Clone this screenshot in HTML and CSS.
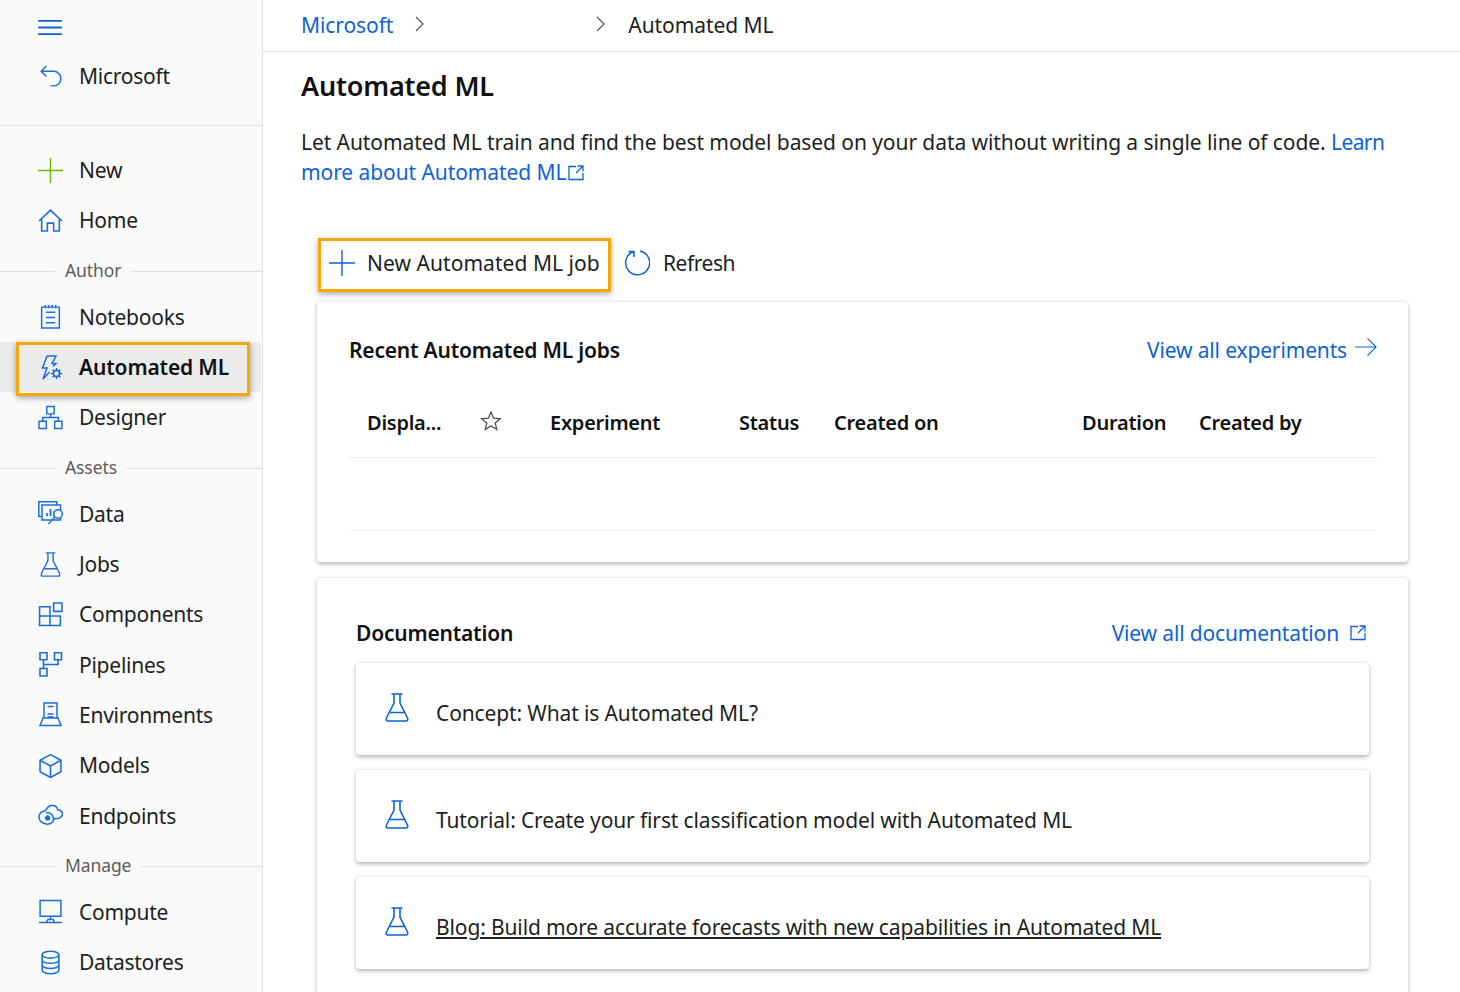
FILE: index.html
```html
<!DOCTYPE html>
<html lang="en">
<head>
<meta charset="utf-8">
<title>Automated ML</title>
<link rel="stylesheet" href="styles.css">
</head>
<body>
<svg class="defs" width="0" height="0" aria-hidden="true">
  <symbol id="flask" viewBox="0 0 24 29"><path d="M6.500 1h11M9 1v9L1.500 25c-.7 1.500 0 3 1.500 3h18c1.500 0 2.200-1.500 1.500-3L15 10V1M5 19.500h14" fill="none" stroke="currentColor" stroke-width="1.600"/></symbol>
</svg>
<div class="app">
  <nav class="side">
    <div class="burger-row"><svg class="ico burger" viewBox="0 0 26 18"><path d="M0 2h25M0 9h25M0 16h25" stroke="currentColor" stroke-width="2" fill="none"/></svg></div>
    <a class="row back"><svg class="ico" viewBox="0 0 24 24"><path d="M8 2 3 7l5 5M3 7h12a6.500 6.500 0 0 1 0 14h-3" fill="none" stroke="currentColor" stroke-width="1.400"/></svg><span>Microsoft</span></a>
    <div class="side-rule"></div>
    <a class="row"><svg class="ico green" viewBox="0 0 26 26"><path d="M13 0v26M0 13h26" stroke="currentColor" stroke-width="1.500" fill="none"/></svg><span>New</span></a>
    <a class="row"><svg class="ico" viewBox="0 0 24 24"><path d="M1 12.500 12 2l11 10.500M3.500 10.500V22H9v-7.500h6V22h5.500V10.500" fill="none" stroke="currentColor" stroke-width="1.500"/></svg><span>Home</span></a>
    <div class="sec"><span>Author</span></div>
    <a class="row"><svg class="ico" viewBox="0 0 24 24"><path d="M3.500 3h17v20h-17zM7 1v3M10.300 1v3M13.700 1v3M17 1v3M7.500 8h9M7.500 13h9M7.500 18h9" fill="none" stroke="currentColor" stroke-width="1.400"/></svg><span>Notebooks</span></a>
    <a class="row sel"><svg class="ico" viewBox="0 0 25 25"><path d="M9 1h9l-4 7.500h4l-3 3M9 1 4.500 13H9L5 24l6.500-7" fill="none" stroke="currentColor" stroke-width="1.500"/><circle cx="18.500" cy="18.500" r="3" fill="none" stroke="currentColor" stroke-width="1.600"/><path d="M18.500 13v2.500M18.500 21.500V24M13 18.500h2.500M21.500 18.500H24M14.700 14.700l1.700 1.700M20.600 20.600l1.700 1.700M14.700 22.300l1.700-1.700M20.600 16.400l1.700-1.700" stroke="currentColor" stroke-width="1.500" fill="none"/></svg><span>Automated ML</span></a>
    <a class="row"><svg class="ico" viewBox="0 0 24 24"><path d="M8.500 1.500h7v7h-7zM1 15.500h7v7H1zM16 15.500h7v7h-7zM12 8.500V12M4.500 15.500V12h15v3.500" fill="none" stroke="currentColor" stroke-width="1.400"/></svg><span>Designer</span></a>
    <div class="sec"><span>Assets</span></div>
    <a class="row"><svg class="ico" viewBox="0 0 25 25"><path d="M3 15.500H.8V.8h18V4" fill="none" stroke="currentColor" stroke-width="1.500"/><path d="M4 4h18.500v15H4z" fill="none" stroke="currentColor" stroke-width="1.500"/><path d="M9 15v-3M12.500 15V8M16 15v-4.500" stroke="currentColor" stroke-width="1.800" fill="none"/><circle cx="20" cy="13" r="4.300" fill="#fafafa" stroke="currentColor" stroke-width="1.500"/><path d="M16.800 16 10.500 23" stroke="currentColor" stroke-width="1.500" fill="none"/></svg><span>Data</span></a>
    <a class="row"><svg class="ico" viewBox="0 0 24 29"><use href="#flask"/></svg><span>Jobs</span></a>
    <a class="row"><svg class="ico" viewBox="0 0 24 24"><path d="M1.500 4.500h10v18h-10zM1.500 13.500h20v9h-10M11.500 13.500h10M15 1h8v8h-8z" fill="none" stroke="currentColor" stroke-width="1.500"/></svg><span>Components</span></a>
    <a class="row"><svg class="ico" viewBox="0 0 25 25"><path d="M2 .8h7v7H2zM16.500 .8h7v7h-7zM2 16.500h7v7.500H2zM5.500 7.800v8.700M20 7.800v4.700H5.500" fill="none" stroke="currentColor" stroke-width="1.600"/></svg><span>Pipelines</span></a>
    <a class="row"><svg class="ico" viewBox="0 0 25 25"><path d="M6 15.500V1h13v14.500M2 23.500 5 16h15l3 7.500zM9.500 4.500h6M9.500 12h6M9.500 15h6" fill="none" stroke="currentColor" stroke-width="1.500"/></svg><span>Environments</span></a>
    <a class="row"><svg class="ico" viewBox="0 0 24 24"><path d="M12 1.500 22 7v11l-10 5.500L2 18V7zM2 7l10 5.500L22 7M12 12.500v11" fill="none" stroke="currentColor" stroke-width="1.500" stroke-linejoin="round"/></svg><span>Models</span></a>
    <a class="row"><svg class="ico" viewBox="0 0 26 26"><path d="M8 8C10 2 19 0 20.500 7 25 7 26.500 12 24.500 14 23 16.500 20 16.500 17 16.500M8 8C4 8 1 11 1 14.500 1 19 5 22 10 22 14.500 22 17 18.500 16 15 15 11.500 12 9.500 8.500 10.500" fill="none" stroke="currentColor" stroke-width="1.600"/><circle cx="10" cy="15.500" r="2.700" fill="currentColor"/></svg><span>Endpoints</span></a>
    <div class="sec"><span>Manage</span></div>
    <a class="row"><svg class="ico" viewBox="0 0 24 24"><path d="M2 1.500h20v15H2zM12 16.500V20M8 22.500l1.500-2.800h5l1.500 2.800zM1 22.500h22" fill="none" stroke="currentColor" stroke-width="1.400"/></svg><span>Compute</span></a>
    <a class="row"><svg class="ico" viewBox="0 0 24 24"><ellipse cx="12" cy="4.500" rx="8" ry="3.300" fill="none" stroke="currentColor" stroke-width="1.500"/><path d="M4 4.500v15c0 1.900 3.600 3.300 8 3.300s8-1.400 8-3.300v-15M4 9.500c0 1.900 3.600 3.300 8 3.300s8-1.400 8-3.300M4 14.500c0 1.900 3.600 3.300 8 3.300s8-1.400 8-3.300" fill="none" stroke="currentColor" stroke-width="1.500"/></svg><span>Datastores</span></a>
  </nav>
  <main class="main">
    <header class="crumbs">
      <a class="link">Microsoft</a>
      <svg class="chev" viewBox="0 0 10 16"><path d="M1 1l7 7-7 7" fill="none" stroke="currentColor" stroke-width="1.200"/></svg>
      <span class="crumb-gap"></span>
      <svg class="chev" viewBox="0 0 10 16"><path d="M1 1l7 7-7 7" fill="none" stroke="currentColor" stroke-width="1.200"/></svg>
      <span class="crumb-cur">Automated ML</span>
    </header>
    <div class="content">
      <h1 class="title">Automated ML</h1>
      <div class="intro">
        <p class="line">Let Automated ML train and find the best model based on your data without writing a single line of code. <a class="link learn">Learn</a></p>
        <p class="line"><a class="link">more about Automated ML<svg class="ext" viewBox="0 0 16 16"><path d="M8 1.500H1v13h14V8M9.500 1H15v5.500M15 1 8 8" fill="none" stroke="currentColor" stroke-width="1.300"/></svg></a></p>
      </div>
      <div class="toolbar">
        <button class="tbtn primary"><svg class="tico" viewBox="0 0 26 26"><path d="M13 0v26M0 13h26" stroke="currentColor" stroke-width="1.400" fill="none"/></svg><span>New Automated ML job</span></button>
        <button class="tbtn refresh"><svg class="tico" viewBox="0 0 26 26"><path d="M16 1A12 12 0 1 1 9.500 1.500M4.500 1.500H10V7" fill="none" stroke="currentColor" stroke-width="1.500"/></svg><span>Refresh</span></button>
      </div>
      <section class="card recent">
        <div class="card-head">
          <h2>Recent Automated ML jobs</h2>
          <a class="link more">View all experiments<svg class="arrow" viewBox="0 0 24 20"><path d="M0 10h22M13 1l9 9-9 9" fill="none" stroke="currentColor" stroke-width="1.200"/></svg></a>
        </div>
        <div class="thead">
          <span>Displa...</span>
          <span><svg class="star" viewBox="0 0 22 22"><path d="M11 2l2.600 6.200 6.600.5-5 4.300 1.600 6.500L11 16l-5.800 3.500L6.800 13l-5-4.300 6.600-.5z" fill="none" stroke="currentColor" stroke-width="1.200"/></svg></span>
          <span>Experiment</span>
          <span>Status</span>
          <span>Created on</span>
          <span>Duration</span>
          <span>Created by</span>
        </div>
        <div class="tbody"></div>
      </section>
      <section class="card docs">
        <div class="doc-head">
          <h2>Documentation</h2>
          <a class="link more">View all documentation<svg class="ext big" viewBox="0 0 16 16"><path d="M8 1.500H1v13h14V8M9.500 1H15v5.500M15 1 8 8" fill="none" stroke="currentColor" stroke-width="1.300"/></svg></a>
        </div>
        <article class="doc"><svg class="doc-ico" viewBox="0 0 24 29"><use href="#flask"/></svg><span>Concept: What is Automated ML?</span></article>
        <article class="doc"><svg class="doc-ico" viewBox="0 0 24 29"><use href="#flask"/></svg><span>Tutorial: Create your first classification model with Automated ML</span></article>
        <article class="doc"><svg class="doc-ico" viewBox="0 0 24 29"><use href="#flask"/></svg><span class="u">Blog: Build more accurate forecasts with new capabilities in Automated ML</span></article>
      </section>
    </div>
  </main>
</div>
</body>
</html>
```
FILE: styles.css
```css
* { box-sizing: border-box; }
html, body { margin: 0; height: 992px; overflow: hidden; background: #fff; }
body { font-family: "Noto Sans", "Open Sans", sans-serif; font-size: 21px; color: #201f1e; letter-spacing: -0.08px; }
.defs { position: absolute; }
.app { display: flex; height: 992px; }

.side { width: 263px; flex: none; background: #fafafa; border-right: 1px solid #e1e1e1; display: flex; flex-direction: column; overflow: hidden; letter-spacing: -0.25px; }
.burger-row { height: 51px; padding: 19px 0 0 38px; }
.ico { width: 25px; height: 25px; color: #1a6ddb; flex: none; }
.burger { display: block; height: 17px; width: 25px; color: #0b5fd8; }
.green { color: #6bb700; }
.row { display: flex; align-items: center; gap: 16px; height: 50.320px; padding-left: 38px; color: #201f1e; flex: none; }
.back { height: 50px; }
.side-rule { height: 1px; background: #e1e1e1; margin: 24px 0 19px; flex: none; }
.sec { height: 46px; flex: none; display: flex; align-items: center; padding-top: 2px; font-size: 17.500px; color: #5c5c5c; gap: 10px; letter-spacing: -0.1px; }
.sec::before { content: ""; width: 55px; height: 1px; background: #e1e1e1; margin-top: 4px; }
.sec::after { content: ""; flex: 1; height: 1px; background: #e1e1e1; margin-top: 4px; }
.sel { position: relative; background: #ebebeb; font-weight: 600; margin-right: 1px; border-radius: 0 4px 4px 0; color: #111; letter-spacing: -0.15px; }
.sel::after { content: ""; position: absolute; left: 16px; top: 0; width: 228px; height: 48px; border: 3px solid #f7a707; box-shadow: 0 2px 6px rgba(0,0,0,.35); }

.main { flex: 1; min-width: 0; }
.crumbs { height: 52px; border-bottom: 1px solid #e1e1e1; display: flex; align-items: center; padding: 0 0 2px 38px; }
.link { color: #0f62d6; }
.chev { width: 10px; height: 16px; color: #555; margin-left: 22px; margin-top: -2px; }
.crumb-gap { width: 149px; }
.crumb-cur { margin-left: 22px; }
.content { padding: 0 51px 0 38px; }
.title { margin: 14px 0 0; font-size: 27px; line-height: 40px; font-weight: 600; color: #111; letter-spacing: -0.2px; }
.intro { margin: 21px 0 0; line-height: 30px; color: #201f1e; }
.line { margin: 0; white-space: nowrap; }
.learn { letter-spacing: -0.6px; }
.ext { width: 16px; height: 16px; margin-left: 2px; vertical-align: -1px; }
.ext.big { margin-left: 11px; vertical-align: -1px; }

.toolbar { display: flex; align-items: center; margin: 51px 0 0 17px; height: 54px; gap: 13px; }
.tbtn { display: flex; align-items: center; gap: 12px; height: 54px; background: none; border: 0; font: inherit; letter-spacing: 0.05px; color: #201f1e; padding: 0 0 5px; }
.tbtn.primary { position: relative; width: 293px; padding-left: 11px; }
.tbtn.primary::after { content: ""; position: absolute; inset: 0; border: 3px solid #f7a707; box-shadow: 0 2px 6px rgba(0,0,0,.35); }
.tbtn.refresh { letter-spacing: -0.45px; gap: 13px; }
.tico { width: 26px; height: 26px; color: #0f62d6; flex: none; }

.card { background: #fff; border-radius: 4px; box-shadow: 0 1.500px 4px rgba(0,0,0,.3); margin-left: 16px; width: 1091px; }
.recent { height: 260px; margin-top: 10px; padding: 0 30px 0 32px; }
.card-head { display: flex; justify-content: space-between; align-items: center; height: 96px; }
h2 { margin: 0; font-size: 21px; font-weight: 600; color: #111; letter-spacing: -0.2px; }
.more { display: flex; align-items: center; letter-spacing: -0.15px; }
.arrow { width: 23px; height: 20px; margin: -6px 0 0 8px; }
.thead { height: 60px; border-bottom: 1px solid #ececec; font-size: 20px; font-weight: 600; color: #111; display: grid; grid-template-columns: 113px 70px 189px 95px 248px 117px 1fr; padding: 0 0 10px 18px; align-items: center; margin-right: 1px; letter-spacing: -0.25px; }
.star { width: 22px; height: 22px; color: #444; display: block; margin-top: -3px; }
.tbody { height: 73px; border-bottom: 1px solid #f3f3f3; margin-right: 1px; }
.docs { margin-top: 16px; height: 430px; padding: 32px 39px 0; }
.doc-head { display: flex; justify-content: space-between; align-items: center; height: 46px; margin-bottom: 7px; padding-right: 3px; }
.doc { height: 91.700px; margin-bottom: 15.500px; border-radius: 4px; background: #fff; box-shadow: 0 1.500px 4px rgba(0,0,0,.3); display: flex; align-items: center; padding-left: 29px; gap: 27px; letter-spacing: -0.13px; }
.doc span { margin-top: 8px; }
.doc-ico { width: 24px; height: 29px; color: #0f62d6; margin-top: -3px; flex: none; }
.u { text-decoration: underline; }
```
